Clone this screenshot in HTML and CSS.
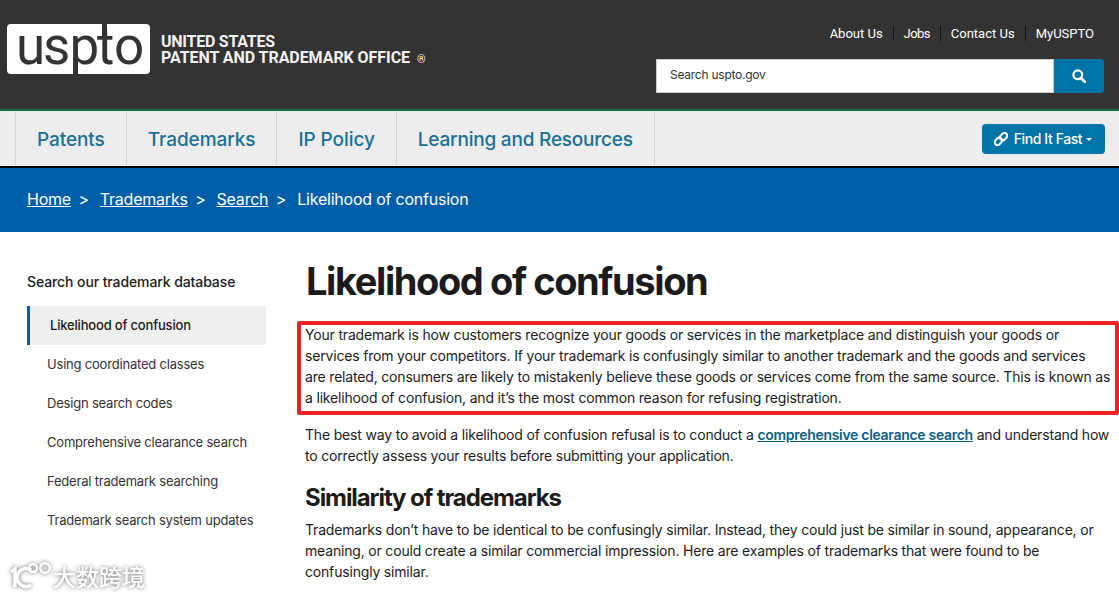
FILE: index.html
```html
<!DOCTYPE html>
<html lang="en">
<head>
<meta charset="utf-8">
<title>Likelihood of confusion | USPTO</title>
<link rel="stylesheet" href="styles.css">
</head>
<body>
<header class="masthead">
  <a class="brand">
    <svg class="logo" width="143" height="50" viewBox="0 0 143 50">
      <rect width="143" height="50" rx="4" fill="#fff"/>
      <text x="9 36 62.5 90 107" y="39.5" class="logo-text">uspto</text>
      <rect x="66" y="34" width="5" height="16" fill="#333"/>
      <rect x="95" y="0" width="5" height="14" fill="#333"/>
    </svg>
    <span class="agency"><span class="agency-top">UNITED STATES</span><br>PATENT AND TRADEMARK OFFICE<span class="reg">®</span></span>
  </a>
  <div class="tools">
    <nav class="util">
      <a>About Us</a><a class="util-jobs">Jobs</a><a>Contact Us</a><a>MyUSPTO</a>
    </nav>
    <form class="search">
      <span class="search-input">Search uspto.gov</span>
      <span class="search-btn">
        <svg width="14" height="14" viewBox="0 0 14 14"><circle cx="5.8" cy="5.8" r="4.4" fill="none" stroke="#fff" stroke-width="2.2"/><path d="M9 9l4 4" stroke="#fff" stroke-width="2.6" stroke-linecap="round"/></svg>
      </span>
    </form>
  </div>
</header>
<nav class="mainnav">
  <ul class="menu">
    <li>Patents</li><li>Trademarks</li><li>IP Policy</li><li>Learning and Resources</li>
  </ul>
  <a class="fast">
    <svg width="14" height="14" viewBox="0 0 14 14" fill="none" stroke="#fff" stroke-width="2"><rect x="6.8" y="0.6" width="5.6" height="8" rx="2.8" transform="rotate(45 9.6 4.6)"/><rect x="1.6" y="5.4" width="5.6" height="8" rx="2.8" transform="rotate(45 4.4 9.4)"/></svg>
    Find It Fast<span class="caret"></span>
  </a>
</nav>
<div class="crumbs">
  <a>Home</a><span class="sep">&gt;</span><a>Trademarks</a><span class="sep">&gt;</span><a>Search</a><span class="sep">&gt;</span><span>Likelihood of confusion</span>
</div>
<main class="page">
  <aside class="side">
    <h2 class="side-title">Search our trademark database</h2>
    <ul class="side-list">
      <li class="active">Likelihood of confusion</li>
      <li>Using coordinated classes</li>
      <li>Design search codes</li>
      <li>Comprehensive clearance search</li>
      <li>Federal trademark searching</li>
      <li>Trademark search system updates</li>
    </ul>
  </aside>
  <article class="content">
    <h1 class="title">Likelihood of confusion</h1>
    <p class="para marked">Your trademark is how customers recognize your goods or services in the marketplace and distinguish your goods or services from your competitors. If your trademark is confusingly similar to another trademark and the goods and services are&nbsp;related, consumers are likely to mistakenly believe these goods or services come from the same source. This is known as a likelihood of confusion, and it’s the most common reason for refusing registration.</p>
    <p class="para">The best way to avoid a likelihood of confusion refusal is to conduct a <a class="inline">comprehensive clearance search</a> and understand how to correctly assess your results before submitting your application.</p>
    <h2 class="sub">Similarity of trademarks</h2>
    <p class="para">Trademarks don’t have to be identical to be confusingly similar. Instead, they could just be similar in sound, appearance, or meaning, or could create a similar commercial impression. Here are examples of trademarks that were found to be confusingly similar.</p>
  </article>
</main>
<div class="watermark">
  <svg width="45" height="30" viewBox="0 0 45 30" fill="none" stroke="#fff" stroke-width="3.6"><path d="M3 11l4-3v18"/><path d="M23 9a9 9 0 1 0 0 15"/><circle cx="25" cy="7" r="4" stroke-width="2.4"/><circle cx="37" cy="7" r="4.8" stroke-width="2.4"/></svg>
  <span>大数跨境</span>
</div>
</body>
</html>
```
FILE: styles.css
```css
* { box-sizing: border-box; }
html, body { margin: 0; padding: 0; }
body { font-family: Inter, "Liberation Sans", sans-serif; color: #1b1b1b; background: #fff; height: 596px; overflow: hidden; position: relative; }
a { color: inherit; }
ul { list-style: none; margin: 0; padding: 0; }

.masthead { height: 111px; background: #333; border-bottom: 2px solid #1f6b3f; display: flex; justify-content: space-between; padding: 24px 15px 0 7px; }
.brand { display: flex; align-items: flex-start; color: #fff; }
.logo { display: block; }
.logo-text { font-family: Roboto, sans-serif; font-weight: 400; font-size: 53px; fill: #333; }
.agency { font-family: Roboto, sans-serif; font-weight: 700; font-size: 16px; line-height: 16px; margin: 10px 0 0 11px; letter-spacing: -0.06px; color: #f2f2f2; }
.agency-top { letter-spacing: -0.25px; }
.reg { font-size: 11px; font-weight: 400; margin-left: 7px; }

.tools { display: flex; flex-direction: column; align-items: flex-end; }
.util { display: flex; color: #fff; font-family: Roboto, sans-serif; font-size: 13px; margin: 2px 10px 0 0; height: 15px; line-height: 15px; }
.util a { padding: 0 10px; border-left: 1px solid #111; }
.util a:first-child { border-left: 0; }
.util a:last-child { padding-right: 0; }
.util-jobs { letter-spacing: -0.6px; }
.search { display: flex; margin-top: 18px; width: 448px; height: 34px; }
.search-input { flex: 1; background: #fff; border: 1px solid #ccc; font-size: 12px; letter-spacing: -0.25px; line-height: 30px; padding-left: 13px; color: #333; }
.search-btn { width: 50px; background: #0074a6; border-radius: 0 4px 4px 0; display: flex; align-items: center; justify-content: center; }

.mainnav { height: 57px; background: #ededed; border-bottom: 2px solid #000; display: flex; justify-content: space-between; padding: 0 14px 0 15px; }
.menu { display: flex; }
.menu li { padding: 0 21px; font-size: 19px; font-weight: 500; letter-spacing: -0.08px; line-height: 57px; color: #1a7096; border-left: 1px solid #d6d6d6; height: 55px; }
.menu li:last-child { border-right: 1px solid #d6d6d6; letter-spacing: -0.21px; }
.fast { align-self: flex-start; margin-top: 13px; width: 123px; height: 30px; background: #0074a6; border-radius: 4px; color: #fff; font-size: 14px; font-weight: 500; letter-spacing: -0.4px; line-height: 28px; display: flex; align-items: center; justify-content: center; gap: 6px; padding-right: 1px; }
.caret { display: inline-block; border: 3px solid transparent; border-top-color: #fff; border-bottom: 0; margin-left: -2px; }

.crumbs { height: 64px; background: #005ea8; color: #fff; display: flex; align-items: center; padding: 0 0 2px 27px; font-size: 16px; letter-spacing: -0.22px; }
.crumbs a { text-decoration: underline; }
.sep { margin: 0 11px 0 7.5px; }

.page { display: flex; padding: 0 0 0 27px; }
.side { width: 239px; flex: none; padding-top: 41px; }
.side-title { margin: 0 0 15px; font-size: 14px; line-height: 18px; font-weight: 500; letter-spacing: -0.1px; }
.side-list li { height: 39px; line-height: 39px; font-size: 13px; letter-spacing: -0.2px; padding-left: 20px; color: #333; }
.side-list .active { background: #efefef; border-left: 3px solid #005ea8; font-weight: 500; letter-spacing: -0.18px; color: #1b1b1b; }

.content { margin-left: 40px; width: 806px; }
.title { margin: 25px 0 19px; font-size: 38px; line-height: 48px; font-weight: 700; letter-spacing: -1.4px; }
.para { margin: 0 0 10px -1px; font-size: 14px; letter-spacing: -0.18px; line-height: 21px; }
.marked { position: relative; margin-bottom: 16px; }
.marked::after { content: ""; position: absolute; top: -3px; right: -7px; bottom: -7px; left: -8px; border: 4px solid #ee2222; border-radius: 2px; }
.inline { color: #0a5f8a; font-weight: 600; letter-spacing: -0.3px; text-decoration: underline; }
.sub { margin: 17px 0 6px -1px; font-size: 24px; line-height: 30px; font-weight: 700; letter-spacing: -1.08px; }

.watermark { position: absolute; left: 8px; top: 559px; display: flex; align-items: center; gap: 0; color: #fff; font-family: "Noto Sans CJK SC", sans-serif; font-size: 23px; font-weight: 500; filter: drop-shadow(0 0 2px #666); opacity: .95; }
```
